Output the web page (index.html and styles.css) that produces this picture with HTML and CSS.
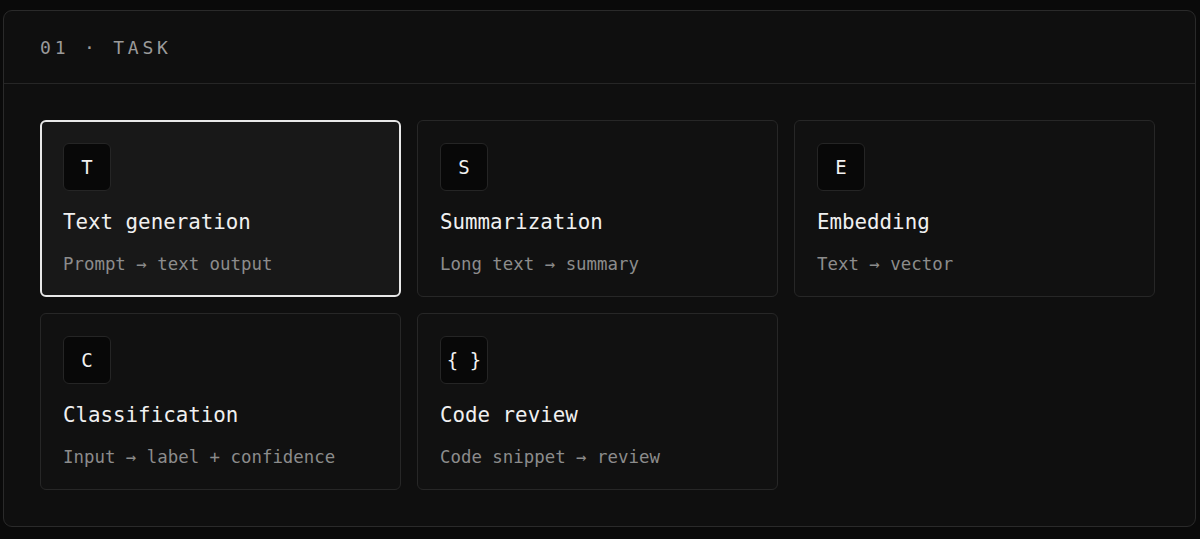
FILE: index.html
```html
<!DOCTYPE html>
<html lang="en">
<head>
<meta charset="utf-8">
<title>Task</title>
<link rel="stylesheet" href="styles.css">
</head>
<body>
<section class="panel">
  <header class="panel-head">01 · TASK</header>
  <div class="grid">
    <div class="card selected">
      <div class="icon">T</div>
      <div class="title">Text generation</div>
      <div class="desc">Prompt → text output</div>
    </div>
    <div class="card">
      <div class="icon">S</div>
      <div class="title">Summarization</div>
      <div class="desc">Long text → summary</div>
    </div>
    <div class="card">
      <div class="icon">E</div>
      <div class="title">Embedding</div>
      <div class="desc">Text → vector</div>
    </div>
    <div class="card">
      <div class="icon">C</div>
      <div class="title">Classification</div>
      <div class="desc">Input → label + confidence</div>
    </div>
    <div class="card">
      <div class="icon">{ }</div>
      <div class="title">Code review</div>
      <div class="desc">Code snippet → review</div>
    </div>
  </div>
</section>
</body>
</html>
```
FILE: styles.css
```css
html, body {
  margin: 0;
  padding: 0;
  background: #0a0a0a;
}
body {
  padding: 10px 4px 11px 3px;
  font-family: "DejaVu Sans Mono", "Liberation Mono", monospace;
  color: #ececec;
}
.panel {
  background: #0f0f0f;
  border: 1px solid #2a2a2a;
  border-radius: 9px;
  overflow: hidden;
}
.panel-head {
  height: 73px;
  box-sizing: border-box;
  padding: 0 36px;
  display: flex;
  align-items: center;
  font-size: 18px;
  letter-spacing: 3.8px;
  color: #9a9a9a;
  border-bottom: 1px solid #262626;
}
.grid {
  display: grid;
  grid-template-columns: repeat(3, 1fr);
  gap: 16px;
  padding: 36px 40px 36px 36px;
}
.card {
  height: 177px;
  box-sizing: border-box;
  background: #111111;
  border: 1px solid #272727;
  border-radius: 6px;
  padding: 22px 22px 0 22px;
}
.card.selected {
  background: #181818;
  border: 2px solid #e8e8e8;
  padding: 21px 21px 0 21px;
}
.icon {
  width: 48px;
  height: 48px;
  box-sizing: border-box;
  background: #080808;
  border: 1px solid #252525;
  border-radius: 6px;
  display: flex;
  align-items: center;
  justify-content: center;
  font-size: 19px;
  color: #f2f2f2;
}
.title {
  margin-top: 18px;
  font-size: 20.8px;
  line-height: 26px;
  color: #f0f0f0;
}
.desc {
  margin-top: 18px;
  font-size: 17.4px;
  line-height: 22px;
  color: #8c8c8c;
}
```
